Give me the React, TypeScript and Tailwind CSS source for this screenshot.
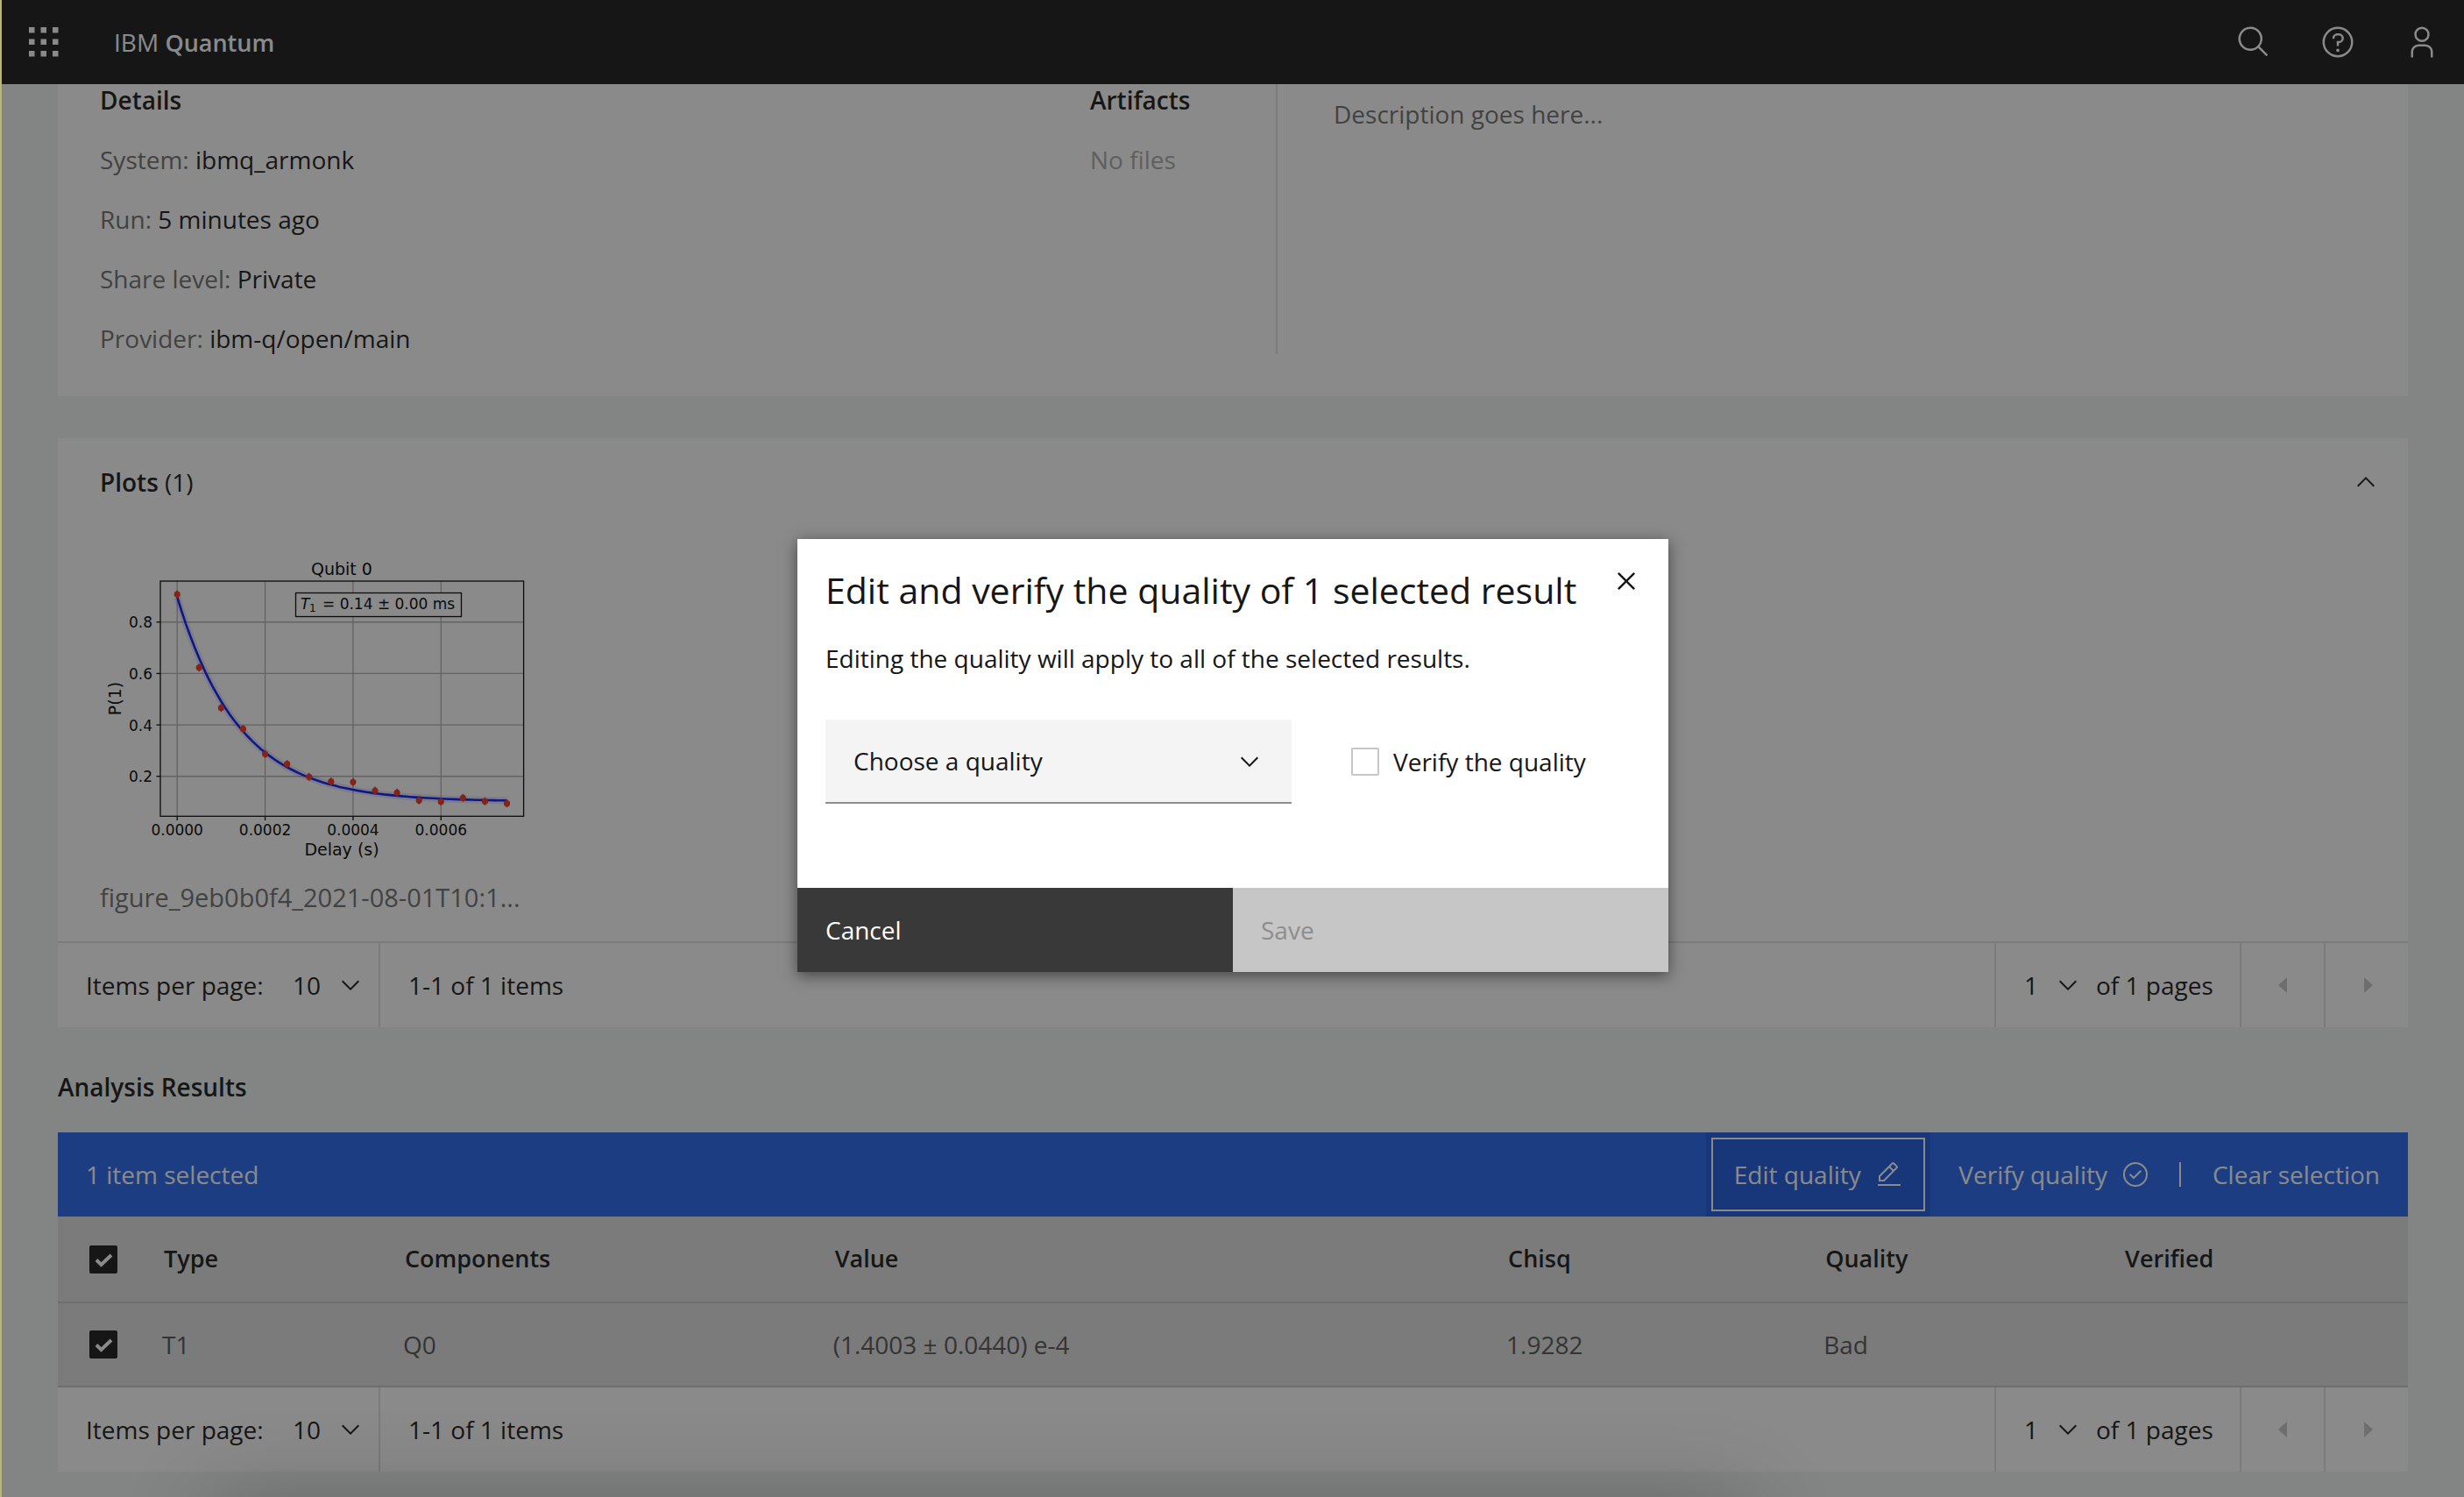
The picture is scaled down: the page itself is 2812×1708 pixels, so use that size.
import type { ReactNode } from "react";

function Icon({ d, className, box = "0 0 32 32" }: { d: string; className: string; box?: string }) {
  return (
    <svg viewBox={box} className={className} fill="currentColor" aria-hidden="true">
      <path d={d} />
    </svg>
  );
}

const CHEVRON_DOWN = "M8 11L3 6 3.7 5.3 8 9.6 12.3 5.3 13 6z";
const CHEVRON_UP = "M8 5L13 10 12.3 10.7 8 6.4 3.7 10.7 3 10z";
const CLOSE = "M12 4.7L11.3 4 8 7.3 4.7 4 4 4.7 7.3 8 4 11.3 4.7 12 8 8.7 11.3 12 12 11.3 8.7 8z";
const SEARCH =
  "M29 27.586l-7.552-7.552a11.018 11.018 0 1 0-1.414 1.414L27.586 29ZM4 13a9 9 0 1 1 9 9A9.01 9.01 0 0 1 4 13Z";
const USER =
  "M16 4a5 5 0 1 1-5 5 5 5 0 0 1 5-5m0-2a7 7 0 1 0 7 7A7 7 0 0 0 16 2zM26 30H24V25a5 5 0 0 0-5-5H13a5 5 0 0 0-5 5v5H6V25a7 7 0 0 1 7-7h6a7 7 0 0 1 7 7z";
const EDIT =
  "M3 27H29V29H3zM25.4 9c.8-.8.8-2 0-2.8l-3.6-3.6c-.8-.8-2-.8-2.8 0l-15 15V24h6.4L25.4 9zM20.4 4L24 7.6l-3 3L17.4 7 20.4 4zM6 22v-3.6l10-10 3.6 3.6-10 10H6z";
const VERIFY =
  "M14 21.4 9 16.4 10.4 15 14 18.6 21.6 11 23 12.4zM16 2a14 14 0 1 0 14 14A14 14 0 0 0 16 2zm0 26a12 12 0 1 1 12-12 12 12 0 0 1-12 12z";
const HELP =
  "M16 2a14 14 0 1 0 14 14A14 14 0 0 0 16 2zm0 26a12 12 0 1 1 12-12 12 12 0 0 1-12 12zM16 22a1.5 1.5 0 1 0 1.5 1.5A1.5 1.5 0 0 0 16 22zM17 8h-1.5A4.49 4.49 0 0 0 11 12.5V13h2v-.5A2.5 2.5 0 0 1 15.5 10H17a2.5 2.5 0 0 1 0 5H15v4.5h2V17a4.5 4.5 0 0 0 0-9z";

function Header() {
  return (
    <header className="flex h-24 items-center bg-[#161616] text-white">
      <button type="button" aria-label="Open menu" className="flex size-24 items-center justify-center">
        <svg viewBox="0 0 34 34" className="size-[34px]" fill="currentColor" aria-hidden="true">
          {[0, 13.5, 27].map((y) =>
            [0, 13.5, 27].map((x) => <rect key={`${x}-${y}`} x={x} y={y} width="6.5" height="6.5" />),
          )}
        </svg>
      </button>
      <a href="#home" className="ml-8 text-[28px] leading-9">
        IBM <span className="text-[27px] font-semibold">Quantum</span>
      </a>
      <div className="ml-auto flex">
        <HeaderButton label="Search" d={SEARCH} />
        <HeaderButton label="Help" d={HELP} />
        <HeaderButton label="Account" d={USER} />
      </div>
    </header>
  );
}

function HeaderButton({ label, d }: { label: string; d: string }) {
  return (
    <button type="button" aria-label={label} className="flex size-24 items-center justify-center">
      <Icon d={d} className="size-10" />
    </button>
  );
}

function Detail({ label, value }: { label: string; value: string }) {
  return (
    <div className="leading-9">
      <dt className="inline text-[#6f6f6f]">{label}:</dt> <dd className="inline">{value}</dd>
    </div>
  );
}

function Details() {
  return (
    <section className="flex bg-white pb-12 pl-12">
      <div className="flex w-[1130px] flex-col gap-8">
        <h2 className="leading-9 font-semibold">Details</h2>
        <dl className="flex flex-col gap-8">
          <Detail label="System" value="ibmq_armonk" />
          <Detail label="Run" value="5 minutes ago" />
          <Detail label="Share level" value="Private" />
          <Detail label="Provider" value="ibm-q/open/main" />
        </dl>
      </div>
      <div className="flex w-[214px] flex-col gap-8 border-r-2 border-[#e0e0e0]">
        <h2 className="leading-9 font-semibold">Artifacts</h2>
        <p className="leading-9 text-[#a8a8a8]">No files</p>
      </div>
      <p className="grow pt-4 pl-16 leading-9 text-[#6f6f6f]">Description goes here...</p>
    </section>
  );
}

const DOT_Y = [
  678, 761.7, 807.7, 831.7, 860.3, 871.7, 886.3, 891.7, 892.3, 902, 904.3, 913.3, 914.7, 910.3, 914.3, 916.7,
];
const plotX = (t: number) => 202.2 + t * 50.18;
const plotY = (p: number) => 944.4 - p * 293.3;
const decay = (t: number) => 0.796 * Math.exp(-t / 1.4) + 0.102;
const CURVE = Array.from({ length: 76 }, (_, i) => i / 10)
  .map((t, i) => `${i === 0 ? "M" : "L"}${plotX(t).toFixed(1)} ${plotY(decay(t)).toFixed(1)}`)
  .join("");
const TIMES = [0, 2, 4, 6];
const LEVELS = [0.2, 0.4, 0.6, 0.8];

function DecayPlot() {
  return (
    <svg
      viewBox="114 636 490 356"
      className="h-[356px] w-[490px]"
      fontFamily="'DejaVu Sans', sans-serif"
      fontSize="17"
      role="img"
      aria-label="Qubit 0 T1 decay"
    >
      <g stroke="#b0b0b0" strokeWidth="1.3">
        {TIMES.map((t) => (
          <line key={t} x1={202.2 + t * 50.18} x2={202.2 + t * 50.18} y1="663" y2="931" />
        ))}
        {LEVELS.map((p) => (
          <line key={p} x1="183" x2="598" y1={plotY(p)} y2={plotY(p)} />
        ))}
      </g>
      <path d={CURVE} fill="none" stroke="#6a5cff" strokeOpacity="0.18" strokeWidth="8" />
      <path d={CURVE} fill="none" stroke="#0818f8" strokeWidth="2.6" />
      <g fill="#f0321c" stroke="#f0321c" strokeWidth="1.6">
        {DOT_Y.map((y, i) => (
          <g key={i}>
            <line x1={202.2 + i * 25.09} x2={202.2 + i * 25.09} y1={y - 4.5} y2={y + 4.5} />
            <circle cx={202.2 + i * 25.09} cy={y} r="2.8" />
          </g>
        ))}
      </g>
      <rect x="183" y="663" width="414.6" height="268.3" fill="none" stroke="#000" strokeWidth="1.3" />
      <g stroke="#000" strokeWidth="1.3">
        {TIMES.map((t) => (
          <line key={t} x1={202.2 + t * 50.18} x2={202.2 + t * 50.18} y1="931" y2="936" />
        ))}
        {LEVELS.map((p) => (
          <line key={p} x1="178.5" x2="183" y1={plotY(p)} y2={plotY(p)} />
        ))}
      </g>
      {TIMES.map((t) => (
        <text key={t} x={202.2 + t * 50.18} y="953" textAnchor="middle">
          {`0.000${t}`}
        </text>
      ))}
      {LEVELS.map((p) => (
        <text key={p} x="174" y={plotY(p) + 6.5} textAnchor="end">
          {p}
        </text>
      ))}
      <text x="390" y="656" fontSize="19" textAnchor="middle">
        Qubit 0
      </text>
      <text x="390" y="976" fontSize="19" textAnchor="middle">
        Delay (s)
      </text>
      <text x="138" y="797" fontSize="19" textAnchor="middle" transform="rotate(-90 138 797)">
        P(1)
      </text>
      <rect x="337.5" y="676.5" width="189" height="27" fill="#fff" stroke="#000" strokeWidth="1.3" />
      <text x="343" y="695" fontStyle="italic">
        T
      </text>
      <text x="353" y="698" fontSize="12">
        1
      </text>
      <text x="368" y="695">= 0.14 ± 0.00 ms</text>
    </svg>
  );
}

function InlineSelect({ label, value, className }: { label: string; value: string; className: string }) {
  return (
    <span className="relative flex">
      <select aria-label={label} defaultValue={value} className={className}>
        <option value={value}>{value}</option>
      </select>
      <span className="pointer-events-none absolute inset-y-0 right-0 flex items-center">
        <Icon box="0 0 16 16" d={CHEVRON_DOWN} className="size-8" />
      </span>
    </span>
  );
}

function PageButton({ label, d }: { label: string; d: string }) {
  return (
    <button
      type="button"
      disabled
      aria-label={label}
      className="flex w-24 items-center justify-center border-l-2 border-[#e0e0e0] text-[#c6c6c6]"
    >
      <Icon d={d} className="size-8" />
    </button>
  );
}

function Pagination() {
  return (
    <nav aria-label="Pagination" className="flex h-24 bg-white">
      <div className="flex items-center border-r-2 border-[#e0e0e0] pr-4 pl-8">
        <span className="w-[204px]">Items per page:</span>
        <InlineSelect label="Items per page" value="10" className="h-24 w-[114px] appearance-none pl-8" />
      </div>
      <span className="flex grow items-center pl-8">1-1 of 1 items</span>
      <div className="flex w-[280px] items-center border-l-2 border-[#e0e0e0]">
        <InlineSelect label="Page number" value="1" className="h-24 w-[98px] appearance-none pl-8" />
        <span className="pl-4">of 1 pages</span>
      </div>
      <PageButton label="Previous page" d="M21 7V25L11 16z" />
      <PageButton label="Next page" d="M13 7V25L23 16z" />
    </nav>
  );
}

function Plots() {
  return (
    <section className="mt-12">
      <div className="border-b-2 border-[#e0e0e0] bg-white">
        <div className="flex h-[100px] items-center justify-between pr-8 pl-12">
          <h2>
            <span className="font-semibold">Plots</span> (1)
          </h2>
          <button type="button" aria-label="Collapse plots">
            <Icon box="0 0 16 16" d={CHEVRON_UP} className="size-8" />
          </button>
        </div>
        <figure className="px-12 pt-9 pb-8">
          <DecayPlot />
          <figcaption className="mt-3.5 text-[29px] leading-9 text-[#6f6f6f]">figure_9eb0b0f4_2021-08-01T10:1...</figcaption>
        </figure>
      </div>
      <Pagination />
    </section>
  );
}

function CheckedBox({ label }: { label: string }) {
  return (
    <span className="relative ml-9 block size-8">
      <input type="checkbox" defaultChecked aria-label={label} className="block size-8 appearance-none rounded-xs bg-[#161616]" />
      <svg viewBox="0 0 32 32" className="pointer-events-none absolute inset-0 size-8" fill="none" stroke="#fff" strokeWidth="4" aria-hidden="true">
        <path d="M8 16.5 13.5 22 25 11" />
      </svg>
    </span>
  );
}

function Th({ children, className }: { children: ReactNode; className?: string }) {
  return <th className={`pl-0.5 text-left text-[27px] font-semibold ${className ?? ""}`}>{children}</th>;
}

function Results() {
  return (
    <section>
      <h2 className="pt-[50px] pb-[34px] leading-9 font-semibold">Analysis Results</h2>
      <div className="flex h-24 items-center bg-[#2464f0] text-white">
        <span className="grow pl-8">1 item selected</span>
        <button type="button" className="flex h-24 w-64 bg-[#1a56de] p-1.5">
          <span className="flex h-full grow items-center justify-center gap-4 border-2 border-white">
            Edit quality
            <Icon d={EDIT} className="size-8" />
          </span>
        </button>
        <button type="button" className="flex h-24 items-center gap-4 pl-8">
          Verify quality
          <Icon d={VERIFY} className="size-8" />
        </button>
        <span className="ml-[34px] h-7 w-0.5 bg-white" />
        <button type="button" className="h-24 pr-8 pl-9">
          Clear selection
        </button>
      </div>
      <table className="w-full table-fixed bg-[#e0e0e0]">
        <thead>
          <tr className="h-[98px] border-b-2 border-[#c6c6c6]">
            <th className="w-[119px]">
              <CheckedBox label="Select all rows" />
            </th>
            <Th className="w-[10.25%]">Type</Th>
            <Th className="w-[18.3%]">Components</Th>
            <Th className="w-[28.65%]">Value</Th>
            <Th className="w-[13.5%]">Chisq</Th>
            <Th className="w-[12.75%]">Quality</Th>
            <Th>Verified</Th>
          </tr>
        </thead>
        <tbody>
          <tr className="h-24 border-b-2 border-[#c6c6c6] text-[#525252]">
            <td>
              <CheckedBox label="Select T1 row" />
            </td>
            <td>T1</td>
            <td>Q0</td>
            <td>(1.4003 ± 0.0440) e-4</td>
            <td>1.9282</td>
            <td>Bad</td>
            <td />
          </tr>
        </tbody>
      </table>
      <Pagination />
    </section>
  );
}

function QualityDialog() {
  return (
    <div
      role="dialog"
      aria-modal="true"
      aria-labelledby="dialog-title"
      className="relative w-[994px] bg-white shadow-[0_4px_16px_rgba(0,0,0,0.5)]"
    >
      <button type="button" aria-label="Close" className="absolute top-0 right-0 flex size-24 items-center justify-center">
        <Icon box="0 0 16 16" d={CLOSE} className="size-10" />
      </button>
      <div className="px-8 pt-[30px] pb-24">
        <h1 id="dialog-title" className="text-[41px] leading-14 whitespace-nowrap">
          Edit and verify the quality of 1 selected result
        </h1>
        <p className="mt-8 leading-9">Editing the quality will apply to all of the selected results.</p>
        <div className="mt-[52px] flex items-center">
          <span className="relative">
            <select
              aria-label="Quality"
              defaultValue=""
              className="block h-24 w-[532px] appearance-none border-b-2 border-[#8d8d8d] bg-[#f4f4f4] pl-8"
            >
              <option value="">Choose a quality</option>
            </select>
            <span className="pointer-events-none absolute inset-y-0 right-8 flex items-center">
              <Icon box="0 0 16 16" d={CHEVRON_DOWN} className="size-8" />
            </span>
          </span>
          <label className="ml-[68px] flex items-center gap-4">
            <input type="checkbox" className="size-8 appearance-none rounded-xs border-2 border-[#c6c6c6]" />
            Verify the quality
          </label>
        </div>
      </div>
      <div className="grid h-24 grid-cols-2">
        <button type="button" className="bg-[#393939] pl-8 text-left text-white">
          Cancel
        </button>
        <button type="button" disabled className="bg-[#c6c6c6] pl-8 text-left text-[#8d8d8d]">
          Save
        </button>
      </div>
    </div>
  );
}

export default function App() {
  return (
    <div className="h-screen overflow-hidden border-l-2 border-[#bdb56c] font-['Open_Sans',sans-serif] text-[28px] text-[#161616]">
      <div className="relative h-full overflow-hidden bg-[#f0f4f2]">
        <Header />
        <main className="px-16">
          <Details />
          <Plots />
          <Results />
        </main>
        <div className="absolute inset-0 flex items-center justify-center bg-[#161616]/50 pt-4">
          <QualityDialog />
        </div>
        <div className="pointer-events-none absolute top-full right-[820px] left-[240px] h-24 shadow-[0_8px_100px_rgba(0,0,0,0.25)]" />
      </div>
    </div>
  );
}
